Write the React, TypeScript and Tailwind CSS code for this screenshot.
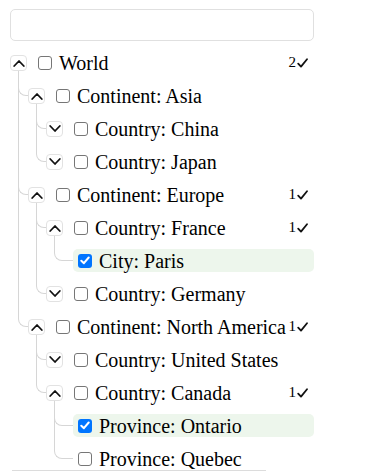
import React from "react";

type Node = {
  label: string;
  expanded?: boolean;
  checked?: boolean;
  count?: number;
  children?: Node[];
};

const tree: Node = {
  label: "World",
  expanded: true,
  count: 2,
  children: [
    {
      label: "Continent: Asia",
      expanded: true,
      children: [
        { label: "Country: China", expanded: false, children: [{ label: "x" }] },
        { label: "Country: Japan", expanded: false, children: [{ label: "x" }] },
      ],
    },
    {
      label: "Continent: Europe",
      expanded: true,
      count: 1,
      children: [
        {
          label: "Country: France",
          expanded: true,
          count: 1,
          children: [{ label: "City: Paris", checked: true }],
        },
        { label: "Country: Germany", expanded: false, children: [{ label: "x" }] },
      ],
    },
    {
      label: "Continent: North America",
      expanded: true,
      count: 1,
      children: [
        { label: "Country: United States", expanded: false, children: [{ label: "x" }] },
        {
          label: "Country: Canada",
          expanded: true,
          count: 1,
          children: [
            { label: "Province: Ontario", checked: true },
            { label: "Province: Quebec" },
          ],
        },
      ],
    },
  ],
};

function Chevron({ up }: { up: boolean }) {
  return (
    <svg width="12" height="8" viewBox="0 0 12 8" fill="none">
      <polyline
        points={up ? "1.2,7 6,2 10.8,7" : "1.2,1 6,6 10.8,1"}
        stroke="#111"
        strokeWidth="1.8"
        strokeLinecap="round"
        strokeLinejoin="round"
      />
    </svg>
  );
}

function Check() {
  return (
    <svg width="11" height="10" viewBox="0 0 11 10" fill="none" className="ml-[1px]">
      <path d="M1.2 5.6 L4 8.6 L10 1.2" stroke="#111" strokeWidth="1.8" strokeLinecap="round" strokeLinejoin="round" />
    </svg>
  );
}

function Box({ checked, className = "" }: { checked?: boolean; className?: string }) {
  if (checked) {
    return (
      <span
        role="checkbox"
        aria-checked="true"
        className={`w-[14px] h-[14px] shrink-0 rounded-[3px] bg-[#0075ff] flex items-center justify-center ${className}`}
      >
        <svg width="10" height="9" viewBox="0 0 10 9" fill="none">
          <path d="M1.3 4.7 L3.9 7.2 L8.7 1.5" stroke="#fff" strokeWidth="2" strokeLinecap="round" strokeLinejoin="round" />
        </svg>
      </span>
    );
  }
  return (
    <span
      role="checkbox"
      aria-checked="false"
      className={`w-[14px] h-[14px] shrink-0 rounded-[3px] border border-[#767676] bg-white ${className}`}
    />
  );
}

function Counter({ n }: { n: number }) {
  return (
    <span className="ml-auto pr-[6px] pl-[2px] text-[15px] leading-none text-black whitespace-nowrap flex items-center">
      <span>{n}</span>
      <Check />
    </span>
  );
}

function Item({ node, isChild, isLast }: { node: Node; isChild: boolean; isLast: boolean }) {
  const leaf = !node.children || node.children.length === 0;
  return (
    <li className="relative flex flex-col gap-[10px]">
      {isChild && (
        <>
          <span
            className={`absolute left-[-10px] top-[-14px] h-[26px] border-l border-b border-[#d6d6d6] rounded-bl-[8px] ${
              leaf ? "w-[19px]" : "w-[10px]"
            }`}
          />
          {!isLast && <span className="absolute left-[-10px] top-0 bottom-0 w-px bg-[#d6d6d6]" />}
        </>
      )}
      {leaf ? (
        <div
          className={`ml-[9px] h-[23px] flex items-center pl-[5px] rounded-[5px] ${
            node.checked ? "bg-[#edf6ec]" : ""
          }`}
        >
          <Box checked={node.checked} />
          <span className="ml-[7px] text-[20px] leading-none whitespace-nowrap">{node.label}</span>
        </div>
      ) : (
        <div className="h-[23px] flex items-center">
          <button className="relative z-10 w-[17px] h-[16px] shrink-0 border border-[#e2e2e2] rounded-[4px] bg-white flex items-center justify-center">
            <Chevron up={!!node.expanded} />
          </button>
          <Box checked={node.checked} className="ml-[11px]" />
          <span className="ml-[7px] text-[20px] leading-none whitespace-nowrap">{node.label}</span>
          {node.count ? <Counter n={node.count} /> : null}
        </div>
      )}
      {!leaf && node.expanded && (
        <ul className="flex flex-col gap-[10px] pl-[18px]">
          {node.children!.map((c, i) => (
            <Item key={i} node={c} isChild isLast={i === node.children!.length - 1} />
          ))}
        </ul>
      )}
    </li>
  );
}

export default function App() {
  return (
    <div className="w-[367px] min-h-[471px] bg-white text-black overflow-hidden font-['Liberation_Serif','Times_New_Roman',serif]">
      <div className="ml-[10px] w-[304px] pt-[9px]">
        <div className="h-[32px] border border-[#e0e0e0] rounded-[5px] bg-white" />
        <ul className="mt-[10px] flex flex-col gap-[10px]">
          <Item node={tree} isChild={false} isLast />
        </ul>
        <div className="ml-[2px] w-[254px] h-[2px] bg-[#dcdcdc]" />
      </div>
    </div>
  );
}
